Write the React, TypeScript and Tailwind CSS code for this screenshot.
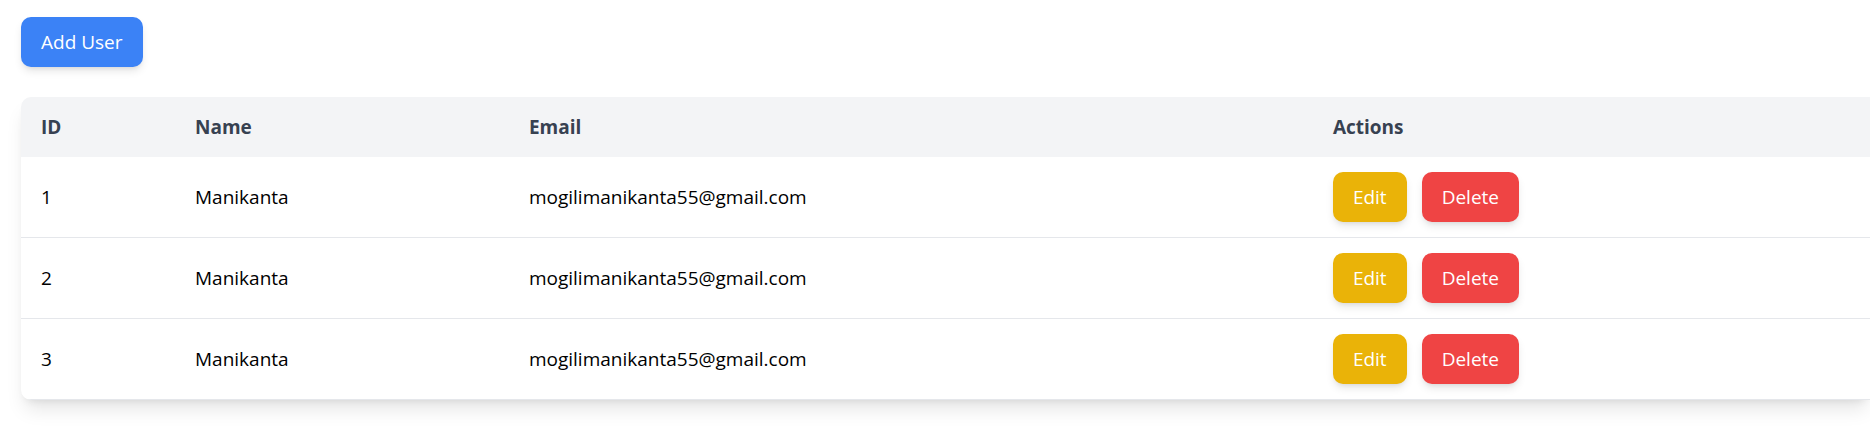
const users = [
  { id: 1, name: "Manikanta", email: "mogilimanikanta55@gmail.com" },
  { id: 2, name: "Manikanta", email: "mogilimanikanta55@gmail.com" },
  { id: 3, name: "Manikanta", email: "mogilimanikanta55@gmail.com" },
];

const buttonBase =
  "h-[50px] cursor-pointer rounded-[10px] px-5 text-[#ffffff] shadow-[0_5px_8px_-1px_rgb(0_0_0/0.1),0_3px_5px_-3px_rgb(0_0_0/0.1)]";

export default function App() {
  return (
    <main className="overflow-hidden bg-white pt-[17px] pb-[30px] pl-[21px] font-['Segoe_UI','Open_Sans',sans-serif] text-[19px] leading-[30px] text-black">
      <button type="button" className={`${buttonBase} bg-[#3b82f6]`}>
        Add User
      </button>

      <div className="mt-[30px] overflow-hidden rounded-l-[10px] bg-white shadow-[0_13px_19px_-4px_rgb(0_0_0/0.1),0_5px_8px_-5px_rgb(0_0_0/0.1)]">
        <table className="w-full table-fixed text-left">
          <colgroup>
            <col className="w-[8.33%]" />
            <col className="w-[18.06%]" />
            <col className="w-[43.48%]" />
            <col />
          </colgroup>
          <thead className="bg-[#f3f4f6] text-[#374151]">
            <tr>
              <th scope="col" className="px-5 py-[15px] font-bold">ID</th>
              <th scope="col" className="px-5 py-[15px] font-bold">Name</th>
              <th scope="col" className="px-5 py-[15px] font-bold">Email</th>
              <th scope="col" className="px-5 py-[15px] font-bold">Actions</th>
            </tr>
          </thead>
          <tbody>
            {users.map((user) => (
              <tr key={user.id} className="border-b border-[#e5e7eb]">
                <td className="px-5 py-[15px]">{user.id}</td>
                <td className="px-5 py-[15px]">{user.name}</td>
                <td className="px-5 py-[15px]">{user.email}</td>
                <td className="px-5 py-[15px]">
                  <div className="flex gap-[15px]">
                    <button type="button" className={`${buttonBase} bg-[#eab308]`}>
                      Edit
                    </button>
                    <button type="button" className={`${buttonBase} bg-[#ef4444]`}>
                      Delete
                    </button>
                  </div>
                </td>
              </tr>
            ))}
          </tbody>
        </table>
      </div>
    </main>
  );
}
